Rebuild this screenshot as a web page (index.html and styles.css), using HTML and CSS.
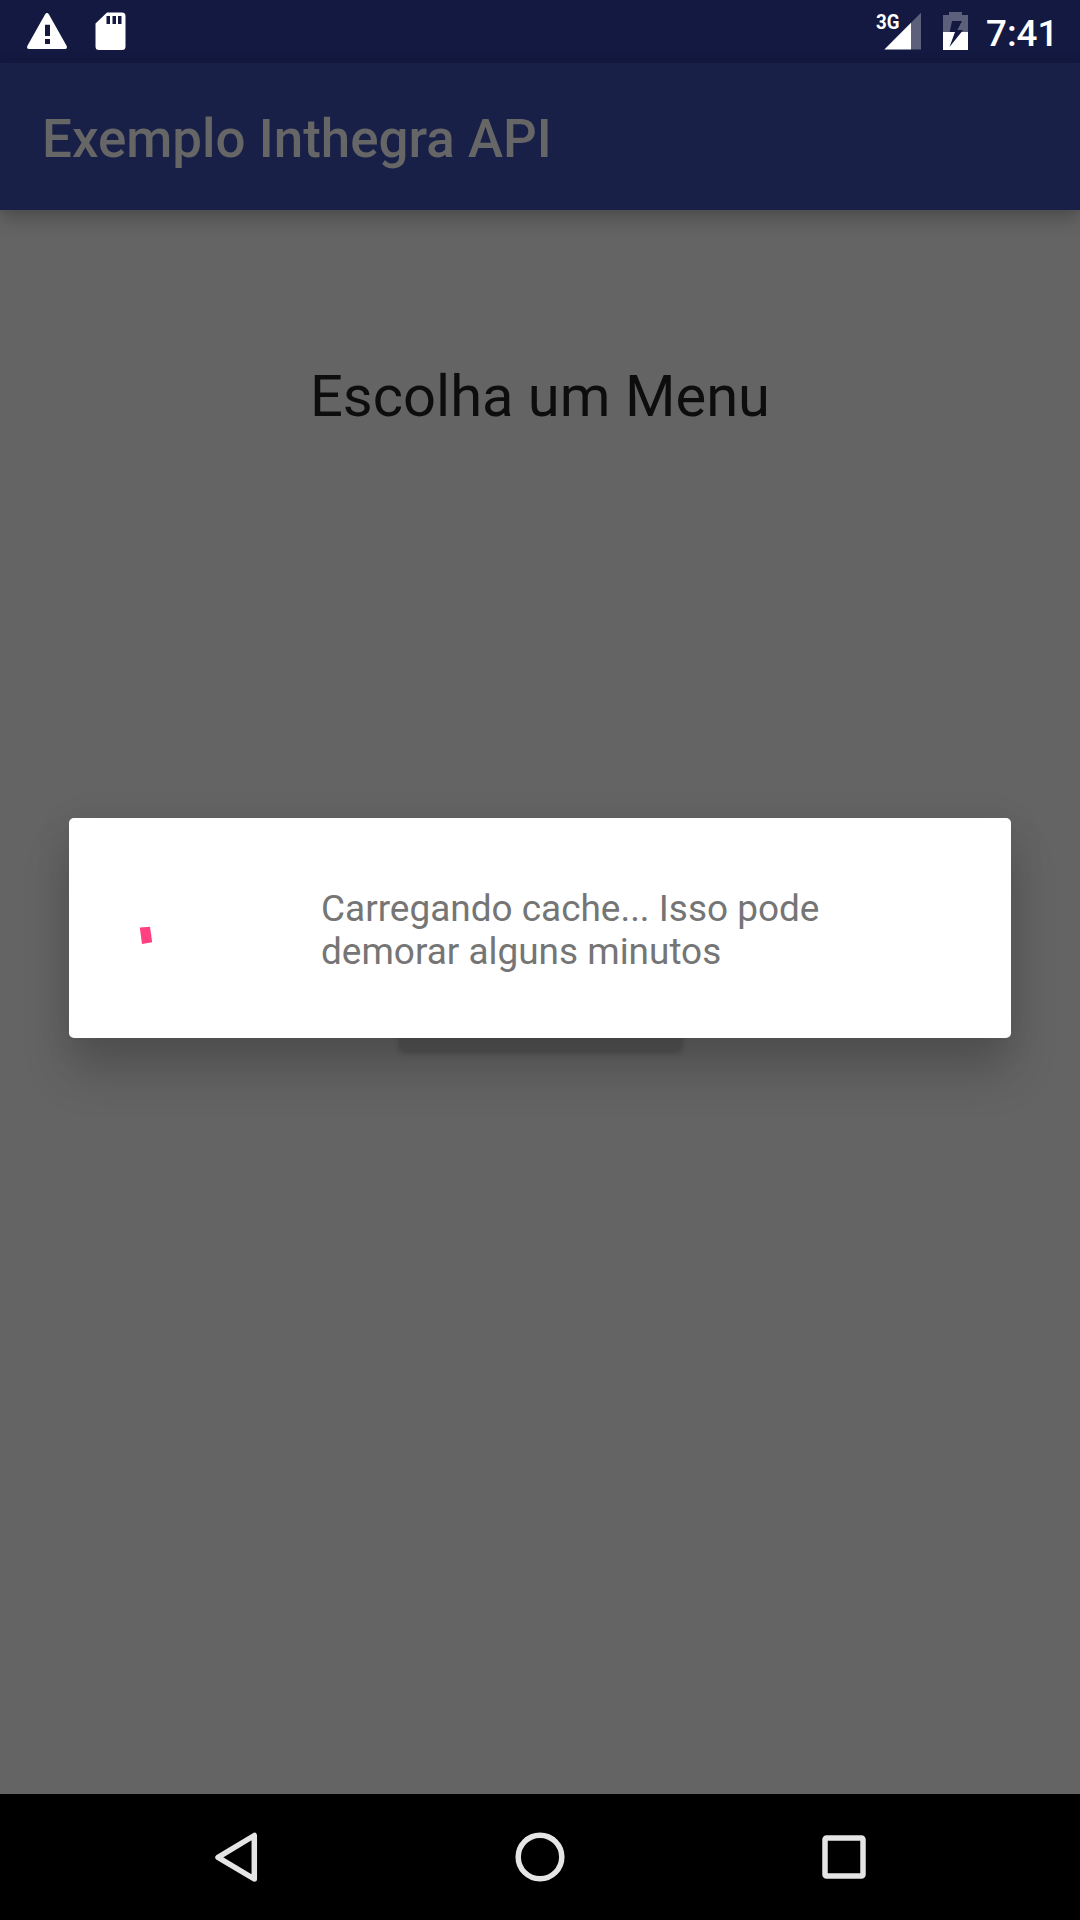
FILE: index.html
```html
<!DOCTYPE html>
<html lang="pt-BR">
<head>
<meta charset="utf-8">
<title>Exemplo Inthegra API</title>
<link rel="stylesheet" href="styles.css">
</head>
<body>
<div class="screen">
  <header class="status-bar">
    <svg class="status-icon warning" width="40" height="37" viewBox="0 0 40 37"><path fill="#fff" fill-rule="evenodd" d="M18 1.4Q20 -1.4 22 1.4L39.7 33Q40.6 36 38 36H2Q-.6 36 .3 33ZM18 11.7V23h5V11.7ZM18 26v5h5v-5Z"/></svg>
    <svg class="status-icon sd-card" width="31" height="39" viewBox="0 0 31 39"><path fill="#fff" fill-rule="evenodd" d="M12 .4H27Q30.5.4 30.5 4V34.500Q30.500 38 27 38H4Q.5 38 .5 34.500V11.500ZM11.500 4v8h3.500V4ZM17.500 4v8h3.500V4ZM23 4v8h3.500V4Z"/></svg>
    <div class="spacer"></div>
    <svg class="signal" width="46" height="39" viewBox="0 0 46 39">
      <path fill="#fff" fill-opacity=".31" d="M35 10.800 45 .8V37.500H35Z"/>
      <path fill="#fff" d="M8.300 37.500 35 10.800V37.500Z"/>
      <text class="network" x="0" y="17" textLength="23.500" lengthAdjust="spacingAndGlyphs">3G</text>
    </svg>
    <svg class="battery" width="25" height="38" viewBox="0 0 25 38">
      <path fill="#fff" fill-opacity=".31" d="M6 0H19V3H25V20H18.500L20 18H14.300L19 9H9L6.700 20H0V3H6Z"/>
      <path fill="#fff" d="M0 20H12L6.500 35 18.500 20H25V38H0Z"/>
    </svg>
    <span class="clock">7:41</span>
  </header>
  <div class="app-bar"><h1 class="app-title">Exemplo Inthegra API</h1></div>
  <main class="content">
    <h2 class="heading">Escolha um Menu</h2>
    <div class="menu-button"></div>
  </main>
  <nav class="nav-bar">
    <svg class="nav-icon" width="50" height="50" viewBox="0 0 50 50"><path d="M43.300 3.500V47L7 25.300Z"/></svg>
    <svg class="nav-icon" width="50" height="50" viewBox="0 0 50 50"><circle cx="25" cy="25" r="21.800"/></svg>
    <svg class="nav-icon" width="50" height="50" viewBox="0 0 50 50"><rect x="6" y="6" width="38" height="38" rx="1.500"/></svg>
  </nav>
  <section class="dialog">
    <svg class="spinner" width="126" height="126" viewBox="0 0 126 126"><path fill="#ff4081" d="M7.800 62.500 18 61.700 20.200 77.200 10 79Z"/></svg>
    <p class="message">Carregando cache... Isso pode demorar alguns minutos</p>
  </section>
</div>
</body>
</html>
```
FILE: styles.css
```css
* { box-sizing: border-box; }
body { margin: 0; font-family: Roboto, sans-serif; }
h1, h2, p { margin: 0; }
svg { display: block; flex: none; overflow: visible; }

.screen {
  position: relative;
  display: flex;
  flex-direction: column;
  width: 1080px;
  height: 1920px;
  overflow: hidden;
  background: #646464;
}

.status-bar {
  display: flex;
  align-items: flex-start;
  height: 63px;
  padding: 12px 25px 0 27px;
  background: #131940;
}
.status-icon.warning { margin-top: 1px; }
.status-icon.sd-card { margin-left: 28px; }
.spacer { flex: 1; }
.signal { margin-right: 21px; }
.network { font-size: 21px; font-weight: 700; fill: #fff; }
.battery { margin-right: 17px; }
.clock {
  width: 70px;
  padding-left: 1px;
  color: #fff;
  font-size: 36.75px;
  font-weight: 500;
  line-height: 43px;
  white-space: nowrap;
}

.app-bar {
  position: relative;
  display: flex;
  align-items: center;
  height: 147px;
  padding: 0 42px;
  background: #192048;
  box-shadow: 0 9px 18px rgba(0, 0, 0, .22), 0 1px 8px rgba(0, 0, 0, .05);
}
.app-title {
  padding-top: 5px;
  color: #666;
  font-size: 52.9px;
  font-weight: 500;
  line-height: 62px;
}

.content {
  flex: 1;
  display: flex;
  flex-direction: column;
  align-items: center;
  padding-top: 152px;
}
.heading {
  color: #0d0d0d;
  font-size: 57.9px;
  font-weight: 400;
  line-height: 68px;
}
.menu-button {
  width: 283px;
  height: 95px;
  margin-top: 525px;
  border-radius: 5px;
  background: #565656;
  box-shadow: 0 3px 6px rgba(0, 0, 0, .2);
}

.nav-bar {
  display: flex;
  align-items: center;
  justify-content: center;
  gap: 254px;
  height: 126px;
  background: #000;
}
.nav-icon { fill: none; stroke: #e5e5e5; stroke-width: 5.5; stroke-linejoin: round; }

.dialog {
  position: absolute;
  top: 818px;
  left: 69px;
  display: flex;
  align-items: center;
  gap: 63px;
  width: 942px;
  height: 220px;
  padding: 0 63px;
  border-radius: 5px;
  background: #fff;
  box-shadow: 0 34px 48px rgba(0, 0, 0, .18), 0 4px 36px rgba(0, 0, 0, .09);
}
.message {
  padding-top: 4px;
  color: #757575;
  font-size: 36.95px;
  line-height: 43px;
}
```
